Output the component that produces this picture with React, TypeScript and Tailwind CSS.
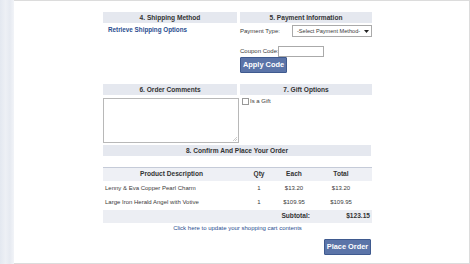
const font = { fontFamily: '"Liberation Sans", Arial, sans-serif' };

function Header({ children }: { children: React.ReactNode }) {
  return (
    <div className="h-[11px] bg-[#e5e8ef] text-center text-[6.6px] font-bold leading-[11px] text-[#333]">
      {children}
    </div>
  );
}

function Button({ label, className }: { label: string; className?: string }) {
  return (
    <button
      className={
        "block h-[16px] rounded-[1px] border border-[#3f5a8f] bg-[#5b74a8] text-[7.4px] font-bold leading-none text-white " +
        (className ?? "")
      }
    >
      {label}
    </button>
  );
}

const items = [
  { name: "Lenny & Eva Copper Pearl Charm", qty: 1, each: "$13.20", total: "$13.20" },
  { name: "Large Iron Herald Angel with Votive", qty: 1, each: "$109.95", total: "$109.95" },
];

export default function App() {
  return (
    <div style={font} className="flex h-[264px] w-[470px] overflow-hidden whitespace-nowrap bg-white text-[#3a3a3a]">
      <div className="h-full w-[14px] bg-[linear-gradient(90deg,#e3e8f0,#edf0f5_40%,#e6eaf1_70%,#f2f4f8)]" />
      <div className="flex h-full flex-1 flex-col border-y border-r border-[#dcdcdc]">
        <div className="ml-[89px] mt-[11px] w-[269px]">
          {/* shipping + payment */}
          <div className="grid grid-cols-[134px_132px] gap-x-[3px]">
            <div>
              <Header>4. Shipping Method</Header>
              <div className="mt-[2px] pl-[5px] text-[6.3px] font-bold text-[#2a4d8f]">
                Retrieve Shipping Options
              </div>
            </div>
            <div>
              <Header>5. Payment Information</Header>
              <div className="mt-[2px] flex items-center text-[6px]">
                <span className="w-[52px] shrink-0">Payment Type:</span>
                <div className="flex h-[12px] w-[80px] shrink-0 items-center justify-between border border-[#aaa] bg-white pl-[4px] pr-[2px] text-[5.6px]">
                  <span>-Select Payment Method-</span>
                  <svg width="5" height="3" viewBox="0 0 5 3">
                    <path d="M0 0h5L2.5 3z" fill="#222" />
                  </svg>
                </div>
              </div>
              <div className="mt-[9px] flex items-center text-[6px]">
                <span className="w-[38px] shrink-0">Coupon Code:</span>
                <div className="h-[11px] w-[46px] shrink-0 border border-[#aaa] bg-white" />
              </div>
              <Button label="Apply Code" className="w-[47px]" />
            </div>
          </div>

          {/* comments + gift */}
          <div className="mt-[11px] grid grid-cols-[134px_132px] gap-x-[3px]">
            <div>
              <Header>6. Order Comments</Header>
              <div className="relative mt-[3px] h-[45px] w-[136px] border border-[#b8b8b8] bg-white">
                <svg className="absolute bottom-[1px] right-[1px]" width="5" height="5" viewBox="0 0 5 5">
                  <path d="M5 1L1 5M5 3L3 5" stroke="#aaa" strokeWidth="0.6" />
                </svg>
              </div>
            </div>
            <div>
              <Header>7. Gift Options</Header>
              <div className="mt-[2px] flex items-center gap-[1px] pl-[2px] text-[6px]">
                <span className="inline-block h-[7px] w-[7px] border border-[#999] bg-white" />
                <span>Is a Gift</span>
              </div>
            </div>
          </div>

          <div className="mt-[2px] w-[268px]">
            <Header>8. Confirm And Place Your Order</Header>
          </div>

          {/* cart table */}
          <table className="mt-[11px] w-[269px] border-collapse text-[6px]">
            <thead>
              <tr className="h-[13px] border-t border-[#c5cbd8] bg-[#eef0f5] text-[6.6px] font-bold text-[#333]">
                <th className="w-[137px] font-bold">Product Description</th>
                <th className="w-[38px] font-bold">Qty</th>
                <th className="w-[32px] font-bold">Each</th>
                <th className="font-bold">Total</th>
              </tr>
            </thead>
            <tbody>
              {items.map((it, i) => (
                <tr key={it.name} className={i === 0 ? "h-[15px]" : "h-[14px]"}>
                  <td className="pl-[2px]">{it.name}</td>
                  <td className="text-center">{it.qty}</td>
                  <td className="text-center">{it.each}</td>
                  <td className="text-center">{it.total}</td>
                </tr>
              ))}
              <tr className="h-[13px] bg-[#eceef3] text-[6.6px] font-bold text-[#333]">
                <td />
                <td />
                <td className="text-right">Subtotal:</td>
                <td className="pr-[2px] text-right">$123.15</td>
              </tr>
            </tbody>
          </table>

          <div className="mt-[1px] text-center text-[6px] text-[#2a4d8f]">
            Click here to update your shopping cart contents
          </div>

          <div className="mt-[6px] flex justify-end pr-[1px]">
            <Button label="Place Order" className="w-[47px]" />
          </div>
        </div>
      </div>
    </div>
  );
}
